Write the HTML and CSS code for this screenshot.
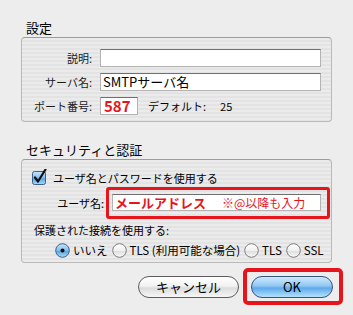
FILE: index.html
```html
<!DOCTYPE html>
<html lang="ja">

<head>
    <meta charset="UTF-8">
    <title>SMTP設定</title>
    <link rel="stylesheet" href="styles.css">
</head>

<body>
    <div class="window">
        <div class="section-title">設定</div>
        <div class="group">
            <div class="field-row">
                <span class="field-label">説明:</span>
                <div class="text-field wide"></div>
            </div>
            <div class="field-row">
                <span class="field-label">サーバ名:</span>
                <div class="text-field wide">SMTPサーバ名</div>
            </div>
            <div class="field-row">
                <span class="field-label">ポート番号:</span>
                <div class="text-field port">587</div>
                <span class="default-port">デフォルト:<span class="default-value">25</span></span>
            </div>
        </div>

        <div class="section-title second">セキュリティと認証</div>
        <div class="group security">
            <div class="check-row">
                <svg class="checkbox" width="16" height="16" viewBox="0 0 16 16">
                    <defs>
                        <linearGradient id="checkFill" x1="0" y1="0" x2="0" y2="1">
                            <stop offset="0" stop-color="#c9e6fb"/>
                            <stop offset="0.5" stop-color="#7fbdf0"/>
                            <stop offset="0.55" stop-color="#5aa6e8"/>
                            <stop offset="1" stop-color="#a6dafb"/>
                        </linearGradient>
                    </defs>
                    <rect x="0.5" y="2.5" width="13" height="13" rx="2" fill="url(#checkFill)" stroke="#3d5f8c"/>
                    <path d="M3 8.5 L6 12.5 L13.5 0.5" fill="none" stroke="#111" stroke-width="2.2" stroke-linecap="round" stroke-linejoin="round"/>
                </svg>
                <span>ユーザ名とパスワードを使用する</span>
            </div>
            <div class="user-row">
                <span class="user-label">ユーザ名:</span>
                <div class="highlight">
                    <div class="text-field user-field"><b>メールアドレス</b><span class="note">※@以降も入力</span></div>
                </div>
            </div>
            <div class="secure-label">保護された接続を使用する:</div>
            <div class="radio-row">
                <span class="radio-item">
                    <svg class="radio" width="15" height="15" viewBox="0 0 15 15">
                        <defs>
                            <linearGradient id="radioOn" x1="0" y1="0" x2="0" y2="1">
                                <stop offset="0" stop-color="#cbe7fb"/>
                                <stop offset="0.5" stop-color="#7ebdf0"/>
                                <stop offset="0.55" stop-color="#58a4e7"/>
                                <stop offset="1" stop-color="#aadcfb"/>
                            </linearGradient>
                        </defs>
                        <circle cx="7.5" cy="7.5" r="6.8" fill="url(#radioOn)" stroke="#3d5f8c"/>
                        <circle cx="7.5" cy="7.5" r="2" fill="#111"/>
                    </svg>
                    <span>いいえ</span>
                </span>
                <span class="radio-item">
                    <svg class="radio" width="15" height="15" viewBox="0 0 15 15">
                        <defs>
                            <linearGradient id="radioOff" x1="0" y1="0" x2="0" y2="1">
                                <stop offset="0" stop-color="#ffffff"/>
                                <stop offset="0.5" stop-color="#f0f0f0"/>
                                <stop offset="0.55" stop-color="#dedede"/>
                                <stop offset="1" stop-color="#fafafa"/>
                            </linearGradient>
                        </defs>
                        <circle cx="7.5" cy="7.5" r="6.8" fill="url(#radioOff)" stroke="#7c7c7c"/>
                    </svg>
                    <span>TLS (利用可能な場合)</span>
                </span>
                <span class="radio-item">
                    <svg class="radio" width="15" height="15" viewBox="0 0 15 15">
                        <circle cx="7.5" cy="7.5" r="6.8" fill="url(#radioOff)" stroke="#7c7c7c"/>
                    </svg>
                    <span>TLS</span>
                </span>
                <span class="radio-item">
                    <svg class="radio" width="15" height="15" viewBox="0 0 15 15">
                        <circle cx="7.5" cy="7.5" r="6.8" fill="url(#radioOff)" stroke="#7c7c7c"/>
                    </svg>
                    <span>SSL</span>
                </span>
            </div>
        </div>

        <div class="button-row">
            <button class="aqua-button cancel">キャンセル</button>
            <div class="highlight ok-frame">
                <button class="aqua-button ok">OK</button>
            </div>
        </div>
    </div>
</body>

</html>
```

FILE: styles.css
```css
* {
    box-sizing: border-box;
    margin: 0;
    padding: 0;
}

body {
    font-family: "Noto Sans CJK JP", "Noto Sans", sans-serif;
    background-color: #ededed;
    color: #000;
    width: 353px;
    height: 315px;
    overflow: hidden;
}

.window {
    padding-top: 20px;
}

.section-title {
    font-size: 13px;
    line-height: 16px;
    margin: 0 0 1px 26px;
}

.section-title.second {
    margin-top: 20px;
}

.group {
    margin: 0 21px;
    padding: 11px 10px 6px 0;
    border: 1px solid #b9b9b9;
    border-top-color: #9c9c9c;
    border-radius: 4px;
    background: repeating-linear-gradient(to bottom, #ebebeb 0, #ebebeb 2px, #e3e3e3 2px, #e3e3e3 4px);
    display: flex;
    flex-direction: column;
    gap: 6px;
}

.field-row {
    display: flex;
    align-items: center;
    height: 18px;
}

.field-label {
    width: 70px;
    margin-right: 8px;
    text-align: right;
    font-size: 11px;
    color: #1a1a1a;
}

.text-field {
    height: 18px;
    background-color: #fff;
    border: 1px solid #b3b3b3;
    border-top-color: #6f6f6f;
    font-size: 13px;
    line-height: 16px;
    padding-left: 2px;
    white-space: nowrap;
}

.text-field.wide {
    flex: 1;
}

.text-field.port {
    width: 38px;
    height: 18px;
    color: #e8141c;
    font-weight: bold;
    font-size: 15px;
    line-height: 16px;
    padding-left: 3px;
}

.default-port {
    font-size: 11px;
    margin-left: 10px;
}

.default-value {
    margin-left: 14px;
}

.security {
    padding: 11px 1px 4px 0;
    gap: 0;
}

.check-row {
    display: flex;
    align-items: center;
    height: 14px;
    padding-left: 10px;
    font-size: 11px;
}

.checkbox {
    margin: -2px 5px 0 0;
}

.user-row {
    display: flex;
    align-items: center;
    margin-top: 2px;
}

.user-label {
    width: 82px;
    margin-right: 2px;
    text-align: right;
    font-size: 11px;
}

.highlight {
    border: 3px solid #e8141c;
    border-radius: 3px;
}

.user-row .highlight {
    flex: 1;
    padding: 4px 6px 5px 3px;
}

.user-field {
    height: 17px;
    color: #e8141c;
    line-height: 15px;
}

.user-field b {
    font-size: 13px;
}

.note {
    font-size: 12px;
    margin-left: 16px;
}

.secure-label {
    font-size: 11px;
    line-height: 14px;
    margin-top: 4px;
    padding-left: 12px;
}

.radio-row {
    display: flex;
    align-items: center;
    height: 16px;
    margin-top: 5px;
    padding-left: 33px;
    gap: 4px;
    font-size: 11.5px;
    white-space: nowrap;
}

.radio-item {
    display: flex;
    align-items: center;
    flex-shrink: 0;
    gap: 3px;
}

.radio {
    flex-shrink: 0;
}

.button-row {
    display: flex;
    justify-content: flex-end;
    align-items: center;
    gap: 4px;
    margin: 5px 10px 0 0;
}

.ok-frame {
    border-width: 4px;
    border-radius: 5px;
    padding: 4px 6px 3px 4px;
}

.aqua-button {
    height: 22px;
    border-radius: 11px;
    font-family: "Noto Sans CJK JP", "Noto Sans", sans-serif;
    font-size: 13px;
    line-height: 20px;
    color: #000;
    display: block;
}

.cancel {
    width: 101px;
    border: 1px solid #5c5c5c;
    background: linear-gradient(to bottom, #ffffff 0, #f2f2f2 45%, #dcdcdc 55%, #f6f6f6 100%);
}

.ok {
    width: 82px;
    border: 1px solid #34537f;
    background: linear-gradient(to bottom, #d0eafd 0, #8fc7f3 45%, #5ea9ea 55%, #b3e2fc 100%);
}
```
